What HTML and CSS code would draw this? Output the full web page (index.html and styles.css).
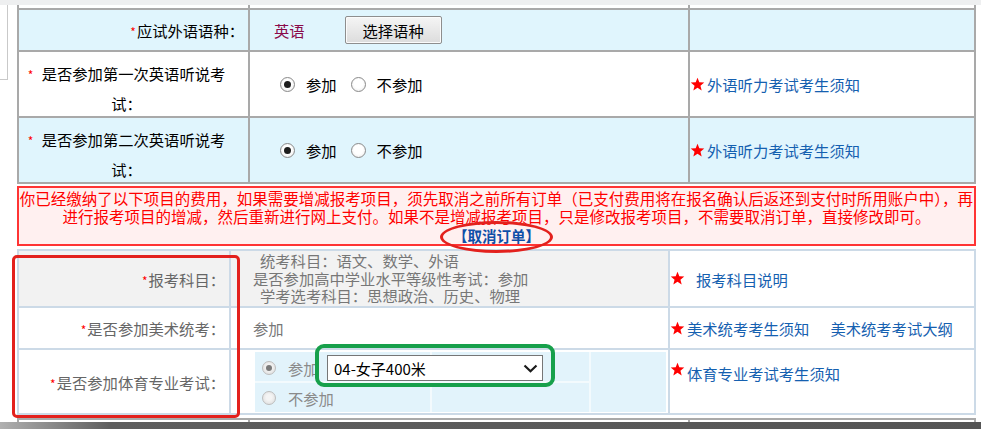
FILE: index.html
```html
<!DOCTYPE html>
<html lang="zh-CN">
<head>
<meta charset="utf-8">
<title>报名信息</title>
<link rel="stylesheet" href="styles.css">
</head>
<body>
<div class="topband"></div>
<div class="page">
  <div class="stub"></div>
  <div class="main">
    <div class="t1">
      <div class="prev"></div><div class="prev"></div><div class="prev"></div>

      <div class="blue lab-r"><span><span class="req">*</span>应试外语语种：</span></div>
      <div class="blue val"><span class="lang">英语</span><button class="btn" type="button">选择语种</button></div>
      <div class="blue"></div>

      <div class="lab-c"><span class="req sp">*</span> 是否参加第一次英语听说考<br>试：</div>
      <div class="val opts">
        <span class="radio on"></span><span class="opt-t">参加</span>
        <span class="radio gap"></span><span class="opt-t">不参加</span>
      </div>
      <div class="lnk"><svg class="star" viewBox="0 0 24 24" width="15" height="15"><polygon points="12,1 14.9,8.4 22.8,8.9 16.7,13.9 18.7,21.6 12,17.3 5.3,21.6 7.3,13.9 1.2,8.9 9.1,8.4" fill="#f00"/></svg><a class="a a1" href="#">外语听力考试考生须知</a></div>

      <div class="blue lab-c"><span class="req sp">*</span> 是否参加第二次英语听说考<br>试：</div>
      <div class="blue val opts">
        <span class="radio on"></span><span class="opt-t">参加</span>
        <span class="radio gap"></span><span class="opt-t">不参加</span>
      </div>
      <div class="blue lnk"><svg class="star" viewBox="0 0 24 24" width="15" height="15"><polygon points="12,1 14.9,8.4 22.8,8.9 16.7,13.9 18.7,21.6 12,17.3 5.3,21.6 7.3,13.9 1.2,8.9 9.1,8.4" fill="#f00"/></svg><a class="a a1" href="#">外语听力考试考生须知</a></div>
    </div>

    <div class="notice">你已经缴纳了以下项目的费用，如果需要增减报考项目，须先取消之前所有订单（已支付费用将在报名确认后返还到支付时所用账户中），再<br>进行报考项目的增减，然后重新进行网上支付。如果不是增减报考项目，只是修改报考项目，不需要取消订单，直接修改即可。<br><a class="cancel" href="#">【取消订单】</a></div>

    <div class="t2">
      <div class="grey lab"><span><span class="req">*</span>报考科目：</span></div>
      <div class="grey multi">
        <div class="ind">统考科目：语文、数学、外语</div>
        <div>是否参加高中学业水平等级性考试：参加</div>
        <div class="ind">学考选考科目：思想政治、历史、物理</div>
      </div>
      <div class="lnk"><svg class="star" viewBox="0 0 24 24" width="15" height="15"><polygon points="12,1 14.9,8.4 22.8,8.9 16.7,13.9 18.7,21.6 12,17.3 5.3,21.6 7.3,13.9 1.2,8.9 9.1,8.4" fill="#f00"/></svg><a class="a a-wide" href="#">报考科目说明</a></div>

      <div class="lab"><span><span class="req">*</span>是否参加美术统考：</span></div>
      <div class="plain">参加</div>
      <div class="lnk"><svg class="star" viewBox="0 0 24 24" width="15" height="15"><polygon points="12,1 14.9,8.4 22.8,8.9 16.7,13.9 18.7,21.6 12,17.3 5.3,21.6 7.3,13.9 1.2,8.9 9.1,8.4" fill="#f00"/></svg><a class="a" href="#">美术统考考生须知</a><a class="a a-next" href="#">美术统考考试大纲</a></div>

      <div class="lab"><span><span class="req">*</span>是否参加体育专业考试：</span></div>
      <div class="sub-wrap">
        <div class="sub">
          <div class="sc"><span class="radio dis on"></span><span class="opt-d">参加</span></div>
          <div class="sc"></div>
          <div class="sc span2"></div>
          <div class="sc"><span class="radio dis"></span><span class="opt-d">不参加</span></div>
          <div class="sc"></div>
          <div class="select"><span>04-女子400米</span><svg width="15" height="9" viewBox="0 0 15 9"><polyline points="1.5,1.5 7.5,7.2 13.5,1.5" fill="none" stroke="#1a1a1a" stroke-width="2.2"/></svg></div>
        </div>
      </div>
      <div class="lnk top"><svg class="star" viewBox="0 0 24 24" width="15" height="15"><polygon points="12,1 14.9,8.4 22.8,8.9 16.7,13.9 18.7,21.6 12,17.3 5.3,21.6 7.3,13.9 1.2,8.9 9.1,8.4" fill="#f00"/></svg><a class="a" href="#">体育专业考试考生须知</a></div>
    </div>

    <div class="t3"><div></div><div></div><div></div></div>

    <div class="mark-red"></div>
    <div class="mark-green"></div>
    <div class="mark-ellipse"></div>
  </div>
</div>
<div class="bottomband"></div>
</body>
</html>
```
FILE: styles.css
```css
* { box-sizing: border-box; }
html, body { margin: 0; padding: 0; }
body {
  background: #fff;
  font-family: "Noto Sans CJK SC", "Noto Sans", sans-serif;
  font-size: 15.3px;
  color: #111;
  height: 429px;
  overflow: hidden;
}
.topband { height: 5px; background: #eeeff0; }
.page { display: flex; align-items: flex-start; }
.stub {
  flex: none; width: 8px; height: 75px;
  border-right: 1px solid #c9c9c9; border-bottom: 1px solid #c9c9c9;
}
.main { position: relative; flex: none; width: 959px; margin-left: 9px; }

/* table 1 */
.t1 {
  display: grid;
  grid-template-columns: 229px 438px 284px;
  grid-template-rows: 3px 40px 64px 64px;
  gap: 2px;
  padding: 0 2px 2px;
  background: #a9a9a9;
}
.t1 > div { background: #fff; display: flex; align-items: center; min-width: 0; }
.t1 > .blue { background: #e0f5fd; }
.t1 > .lab-r { justify-content: flex-end; padding-right: 4px; color: #000; }
.t1 > .lab-c {
  display: block; text-align: center; color: #000;
  padding: 7px 18px 0 4px; line-height: 29px;
}
.req { color: #f00; font-size: 12px; margin-right: 1px; }
.req.sp { margin-right: 5px; }
.val { padding-left: 24px; }
.lang { color: #8a0a4a; }
.btn {
  margin-left: 40px; width: 97px; height: 28px; padding: 0;
  border: 1px solid #8e8e8e; border-radius: 2px;
  box-shadow: inset 0 0 0 1px #fbfbfb;
  background: linear-gradient(#f5f5f5, #dcdcdc);
  font: inherit; font-size: 15.3px; line-height: 26px; color: #000;
}
.opts { padding-left: 30px; color: #000; }
.radio {
  flex: none; width: 15px; height: 15px; border-radius: 50%;
  border: 1px solid #8a8a8a;
  background: radial-gradient(circle at 50% 45%, #fff 45%, #e4e4e4 100%);
  display: inline-flex; align-items: center; justify-content: center;
}
.radio.on::after { content: ""; width: 7px; height: 7px; border-radius: 50%; background: #1e1e1e; }
.radio.gap { margin-left: 14px; }
.opt-t { margin-left: 11px; }
.lnk .star { flex: none; display: block; }
.a { color: #1560b0; text-decoration: none; }
.a1 { margin-left: 2px; }

/* notice */
.notice {
  position: relative;
  margin-top: 2px; height: 60px;
  border: 2px solid #ff3434; background: #fff0f0;
  color: #f00; text-align: center;
  font-size: 15.5px; line-height: 18.3px;
  padding: 1px 0 0;
  white-space: nowrap;
}
.cancel { color: #0f4fa8; font-weight: bold; font-size: 14.5px; text-decoration: none; }

/* table 2 */
.t2 {
  margin-top: 3px;
  display: grid;
  grid-template-columns: 210px 437px 304px;
  grid-template-rows: 55px 40px 63px;
  gap: 2px; padding: 2px;
  background: #ccdae7;
  color: #777;
}
.t2 > div { background: #fff; display: flex; align-items: center; min-width: 0; }
.t2 > .grey { background: #f2f2f2; }
.t2 > .lab { justify-content: flex-end; padding-right: 4px; color: #666; }
.t2 > .multi {
  flex-direction: column; align-items: flex-start; justify-content: center;
  line-height: 17.5px; padding-left: 22px;
}
.ind { padding-left: 7px; }
.t2 > .plain { padding-left: 22px; }
.a-wide { margin-left: 11px; }
.lnk .a:first-of-type:not(.a-wide) { margin-left: 2px; }
.a-next { margin-left: 21px; }
.t2 > .lnk.top { align-items: flex-start; padding-top: 12px; }
.t2 > .sub-wrap { padding: 2px 2px 1px 24px; align-items: stretch; }
.sub {
  position: relative;
  display: grid;
  grid-template-columns: 175px 157px 75px;
  grid-template-rows: 29px 29px;
  gap: 2px;
  background: #f3fafd;
  width: 411px;
}
.sc { background: #e2f3fb; display: flex; align-items: center; padding-left: 7px; color: #8a8a8a; }
.sc:first-child { padding-top: 3px; }
.span2 { grid-row: span 2; }
.radio.dis { width: 14px; height: 14px; border-color: #bdbdbd; background: radial-gradient(circle at 50% 45%, #f4f4f4 30%, #d9d9d9 100%); }
.radio.dis.on::after { width: 6px; height: 6px; background: #7a7a7a; }
.opt-d { margin-left: 12px; }
.select {
  position: absolute; left: 72px; top: 3px; width: 216px; height: 26px;
  border: 1px solid #767676; background: #fff;
  display: flex; align-items: center; justify-content: space-between;
  padding: 0 4px 0 6px; color: #000; font-size: 15px;
}

/* partial next table */
.t3 {
  margin-top: 3px;
  display: grid;
  grid-template-columns: 229px 438px 284px;
  grid-template-rows: 2px;
  gap: 2px; padding: 2px 2px 0;
  background: #a9a9a9;
}
.t3 > div { background: #fff; }

/* annotation marks */
.mark-red {
  position: absolute; left: -5px; top: 250px; width: 228px; height: 163px;
  border: 3.5px solid #e3211d; border-radius: 5px;
}
.mark-green {
  position: absolute; left: 298px; top: 339px; width: 240px; height: 43px;
  border: 4px solid #17a04b; border-radius: 9px;
}
.mark-ellipse {
  position: absolute; left: 423px; top: 216px; width: 113px; height: 32px;
  border: 3px solid #e3211d; border-radius: 50%;
}
.bottomband {
  height: 7px;
  background: linear-gradient(to right, #b0b0b0 0, #5e5e5e 110px, #555 100%);
}
```
